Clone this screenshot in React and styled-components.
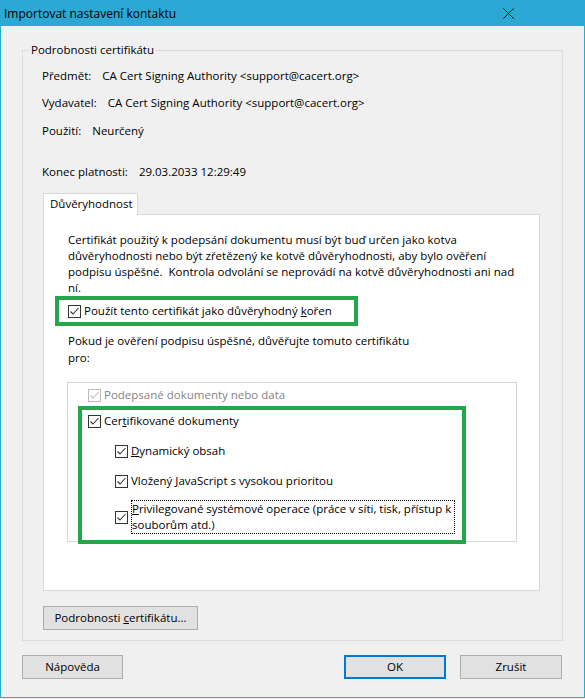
import React from 'react'
import styled, { createGlobalStyle } from 'styled-components'

const GlobalStyle = createGlobalStyle`
  html, body {
    margin: 0;
    padding: 0;
    background: #f0f0f0;
  }
`;

const FONT = `"Segoe UI", "Open Sans", "Noto Sans", sans-serif`;

export default function App() {
  return (
    <>
      <GlobalStyle />
      <Window>
        <TitleBar>
          <Title>Importovat nastavení kontaktu</Title>
          <CloseButton>
            <svg width="11" height="11" viewBox="0 0 11 11">
              <path d="M0.5 0.5 L10.5 10.5 M10.5 0.5 L0.5 10.5" stroke="#000" strokeWidth="1" fill="none" />
            </svg>
          </CloseButton>
        </TitleBar>

        <Group>
          <Legend>Podrobnosti certifikátu</Legend>

          <InfoRow $top={0}>
            <span>Předmět:</span>
            <span>CA Cert Signing Authority &lt;support@cacert.org&gt;</span>
          </InfoRow>
          <InfoRow $top={11}>
            <span>Vydavatel:</span>
            <span>CA Cert Signing Authority &lt;support@cacert.org&gt;</span>
          </InfoRow>
          <InfoRow $top={12}>
            <span>Použití:</span>
            <span>Neurčený</span>
          </InfoRow>
          <InfoRow $top={25}>
            <span>Konec platnosti:</span>
            <span>29.03.2033 12:29:49</span>
          </InfoRow>

          <Tabs>
            <Tab>Důvěryhodnost</Tab>
            <TabPanel>
              <Para>
                Certifikát použitý k podepsání dokumentu musí být buď určen jako kotva<br />
                důvěryhodnosti nebo být zřetězený ke kotvě důvěryhodnosti, aby bylo ověření<br />
                podpisu úspěšné.&nbsp; Kontrola odvolání se neprovádí na kotvě důvěryhodnosti ani nad<br />
                ní.
              </Para>

              <Highlight $width={303} $height={30} $left={-13} $padLeft={9}>
                <CheckRow>
                  <Check />
                  <span>Použít tento certifikát jako důvěryhodný <u>k</u>ořen</span>
                </CheckRow>
              </Highlight>

              <Para $top={6} $lh={17}>
                Pokud je ověření podpisu úspěšné, důvěřujte tomuto certifikátu<br />
                pro:
              </Para>

              <ListBox>
                <CheckRow $disabled>
                  <Check disabled />
                  <span>Podepsané dokumenty nebo data</span>
                </CheckRow>

                <Highlight $width={388} $height={138} $left={-10} $top={3} $padLeft={6} $padTop={3} $column>
                  <CheckRow>
                    <Check />
                    <span>Cer<u>t</u>ifikované dokumenty</span>
                  </CheckRow>
                  <CheckRow $indent={27} $top={14}>
                    <Check />
                    <span><u>D</u>ynamický obsah</span>
                  </CheckRow>
                  <CheckRow $indent={27} $top={14}>
                    <Check />
                    <span>Vložený <u>J</u>avaScript s vysokou prioritou</span>
                  </CheckRow>
                  <CheckRow $indent={27} $top={11}>
                    <Check />
                    <FocusLabel>
                      <u>P</u>rivilegované systémové operace (práce v síti, tisk, přístup k<br />
                      souborům atd.)
                    </FocusLabel>
                  </CheckRow>
                </Highlight>
              </ListBox>
            </TabPanel>
          </Tabs>

          <Button $width={155} $top={15} $left={20}>
            <span>Podrobnosti <u>c</u>ertifikátu...</span>
          </Button>
        </Group>

        <Footer>
          <Button $width={101}>Nápověda</Button>
          <ButtonPair>
            <Button $width={102} $primary>OK</Button>
            <Button $width={102}>Zrušit</Button>
          </ButtonPair>
        </Footer>
      </Window>
    </>
  );
}

function Check({ disabled }) {
  return (
    <Box $disabled={disabled}>
      <svg width="11" height="11" viewBox="0 0 11 11">
        <polyline points="1.5,5.5 4,8 9.5,2" stroke={disabled ? '#bcbcbc' : '#333'} strokeWidth="1.1" fill="none" />
      </svg>
    </Box>
  );
}

const Window = styled.div`
  width: 585px;
  height: 698px;
  box-sizing: border-box;
  border: 1px solid #2ba8d4;
  border-top: none;
  background: #f0f0f0;
  color: #000;
  font-family: ${FONT};
  font-size: 11.5px;
`;

const TitleBar = styled.header`
  display: flex;
  align-items: center;
  justify-content: space-between;
  height: 26px;
  padding-left: 3px;
  background: #2ba8d4;
`;

const Title = styled.div`
  font-size: 12px;
`;

const CloseButton = styled.div`
  width: 46px;
  height: 26px;
  display: flex;
  align-items: center;
  justify-content: center;
  margin-right: 53px;
  padding-top: 1px;
  box-sizing: border-box;
`;

const Group = styled.div`
  position: relative;
  margin: 24px 0 0 21px;
  width: 541px;
  box-sizing: border-box;
  border: 1px solid #dcdcdc;
  padding: 17px 0 10px 0;
`;

const Legend = styled.span`
  position: absolute;
  top: -9px;
  left: 6px;
  padding: 0 2px;
  background: #f0f0f0;
  line-height: 16px;
`;

const InfoRow = styled.div`
  display: flex;
  gap: 11px;
  line-height: 16px;
  margin-top: ${p => p.$top}px;
  padding-left: 19px;
  white-space: nowrap;
`;

const Tabs = styled.div`
  margin: 13px 0 0 20px;
  width: 497px;
`;

const Tab = styled.div`
  display: inline-block;
  box-sizing: border-box;
  height: 22px;
  width: 95px;
  padding: 2px 0 0 6px;
  background: #fff;
  border: 1px solid #d9d9d9;
  border-bottom: none;
  margin-bottom: -1px;
  position: relative;
  line-height: 16px;
`;

const TabPanel = styled.div`
  box-sizing: border-box;
  height: 377px;
  background: #fff;
  border: 1px solid #d9d9d9;
  padding: 17px 0 0 24px;
`;

const Para = styled.div`
  line-height: ${p => p.$lh || 16}px;
  margin-top: ${p => p.$top || 0}px;
  white-space: nowrap;
`;

const Highlight = styled.div`
  box-sizing: border-box;
  width: ${p => p.$width}px;
  height: ${p => p.$height}px;
  margin-left: ${p => p.$left}px;
  margin-top: ${p => p.$top || 0}px;
  border: 4px solid #22a84b;
  padding: ${p => p.$padTop || 0}px 0 0 ${p => p.$padLeft}px;
  display: flex;
  flex-direction: ${p => (p.$column ? 'column' : 'row')};
  align-items: ${p => (p.$column ? 'stretch' : 'center')};
  background: #fff;
`;

const CheckRow = styled.div`
  display: flex;
  align-items: center;
  gap: 3px;
  line-height: 16px;
  white-space: nowrap;
  margin-left: ${p => p.$indent || 0}px;
  margin-top: ${p => p.$top || 0}px;
  color: ${p => (p.$disabled ? '#838383' : '#000')};
`;

const Box = styled.span`
  flex: none;
  width: 13px;
  height: 13px;
  box-sizing: border-box;
  border: 1px solid ${p => (p.$disabled ? '#bcbcbc' : '#333')};
  background: #fff;
  display: flex;
  align-items: center;
  justify-content: center;
`;

const FocusLabel = styled.span`
  display: block;
  border: 1px dotted #000;
  padding: 0 3px 0 0;
  line-height: 16px;
`;

const ListBox = styled.div`
  box-sizing: border-box;
  width: 450px;
  height: 160px;
  margin: 16px 0 0 -1px;
  border: 1px solid #d5d5d5;
  padding: 4px 0 0 20px;
`;

const Button = styled.div`
  box-sizing: border-box;
  width: ${p => p.$width}px;
  height: 24px;
  margin-top: ${p => p.$top || 0}px;
  margin-left: ${p => p.$left || 0}px;
  background: #e1e1e1;
  border: ${p => (p.$primary ? '2px solid #0078d7' : '1px solid #adadad')};
  display: flex;
  align-items: center;
  justify-content: center;
  line-height: 16px;
  white-space: nowrap;
`;

const Footer = styled.div`
  display: flex;
  justify-content: space-between;
  margin: 14px 0 0 21px;
  width: 540px;
`;

const ButtonPair = styled.div`
  display: flex;
  gap: 14px;
`;
